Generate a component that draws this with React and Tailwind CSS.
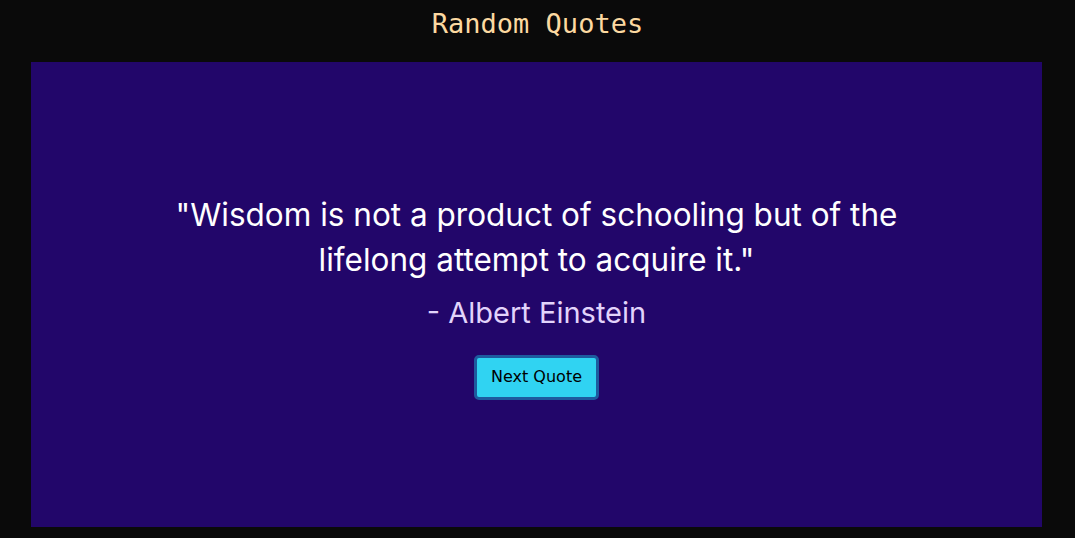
import { useState } from 'react';

const quotes = [
  { text: 'Wisdom is not a product of schooling but of the lifelong attempt to acquire it.', author: 'Albert Einstein' },
  { text: 'The only way to do great work is to love what you do.', author: 'Steve Jobs' },
];

const App = () => {
  const [index, setIndex] = useState(0);
  const quote = quotes[index];

  return (
    <div className="min-h-screen bg-[#0a0a0a] flex flex-col">
      <header className="h-[62px] flex items-center justify-center">
        <h1 className="text-[27px] text-[#fcd9a1] font-['DejaVu_Sans_Mono',monospace] leading-none -mt-[15px]">Random Quotes</h1>
      </header>
      <main className="ml-[31px] w-[1011px] h-[465px] bg-[#22066a] flex flex-col items-center justify-center pt-[2px]">
        <p className="max-w-[780px] text-center text-white text-[31.5px] leading-[45px] font-['Inter',sans-serif]">
          {`"${quote.text}"`}
        </p>
        <p className="mt-[13px] text-[29px] leading-[36px] text-[#e2d4fb] font-['Inter',sans-serif]">{`- ${quote.author}`}</p>
        <button
          onClick={() => setIndex((index + 1) % quotes.length)}
          className="mt-[24px] w-[125px] h-[45px] bg-[#30d3f2] border-[3px] border-[#1d5b9f] rounded-[5px] text-black text-[16px] font-['DejaVu_Sans',sans-serif]"
        >
          Next Quote
        </button>
      </main>
    </div>
  );
};

export default App;
